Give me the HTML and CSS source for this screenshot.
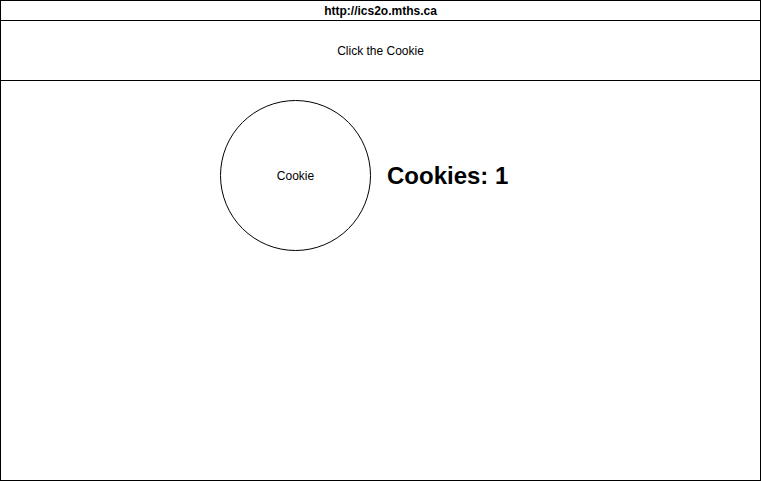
FILE: index.html
```html
<!DOCTYPE html>
<html>
<head>
<meta charset="utf-8">
<link rel="stylesheet" href="styles.css">
</head>
<body>
<div class="frame">
  <div class="urlbar">http://ics2o.mths.ca</div>
  <div class="header">Click the Cookie</div>
  <div class="content">
    <div class="cookie">Cookie</div>
    <div class="count">Cookies: 1</div>
  </div>
</div>
</body>
</html>
```
FILE: styles.css
```css
html, body {
  margin: 0;
  padding: 0;
  background: #ffffff;
}
body {
  font-family: "Liberation Sans", Arial, sans-serif;
  color: #000000;
}
.frame {
  box-sizing: border-box;
  width: 761px;
  height: 481px;
  border: 1px solid #000000;
  display: flex;
  flex-direction: column;
}
.urlbar {
  height: 19px;
  border-bottom: 1px solid #000000;
  display: flex;
  align-items: center;
  justify-content: center;
  font-size: 12px;
  font-weight: bold;
}
.header {
  height: 59px;
  border-bottom: 1px solid #000000;
  display: flex;
  align-items: center;
  justify-content: center;
  font-size: 12px;
}
.content {
  display: flex;
  align-items: center;
  padding: 19px 0 0 219px;
  gap: 16px;
}
.cookie {
  box-sizing: border-box;
  width: 151px;
  height: 151px;
  border: 1px solid #000000;
  border-radius: 50%;
  display: flex;
  align-items: center;
  justify-content: center;
  font-size: 12px;
}
.count {
  font-size: 24px;
  font-weight: bold;
}
```
